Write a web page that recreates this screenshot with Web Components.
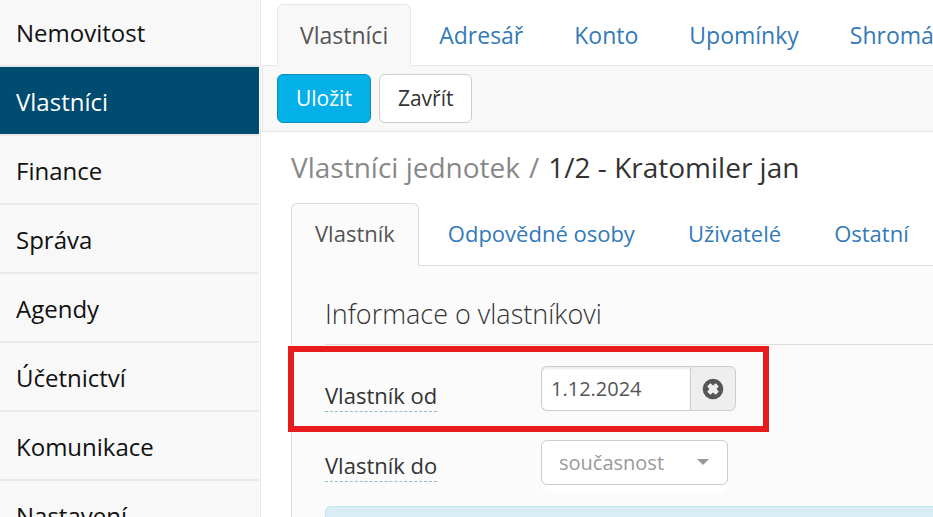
<!DOCTYPE html>
<html lang="cs">
<head>
<meta charset="utf-8">
<meta name="viewport" content="width=device-width, initial-scale=1">
<title>Vlastníci jednotek</title>
<style>
  html, body {
    height: 100%;
    margin: 0;
    overflow: hidden;
  }
  body {
    background: #fff;
    color: #333;
    font-family: "Open Sans", "Noto Sans", sans-serif;
  }
</style>
</head>
<body>

<app-shell>
  <side-nav slot="nav">
    <nav-item href="#nemovitost">Nemovitost</nav-item>
    <nav-item href="#vlastnici" active>Vlastníci</nav-item>
    <nav-item href="#finance">Finance</nav-item>
    <nav-item href="#sprava">Správa</nav-item>
    <nav-item href="#agendy">Agendy</nav-item>
    <nav-item href="#ucetnictvi">Účetnictví</nav-item>
    <nav-item href="#komunikace">Komunikace</nav-item>
    <nav-item href="#nastaveni">Nastavení</nav-item>
  </side-nav>

  <tab-bar class="main">
    <tab-item href="#vlastnici" active>Vlastníci</tab-item>
    <tab-item href="#adresar">Adresář</tab-item>
    <tab-item href="#konto">Konto</tab-item>
    <tab-item href="#upominky">Upomínky</tab-item>
    <tab-item href="#shromazdeni">Shromáždění</tab-item>
  </tab-bar>

  <tool-bar>
    <action-button primary>Uložit</action-button>
    <action-button>Zavřít</action-button>
  </tool-bar>

  <page-content>
    <page-title section="Vlastníci jednotek">1/2 - Kratomiler jan</page-title>

    <tab-bar class="sub">
      <tab-item href="#vlastnik" active>Vlastník</tab-item>
      <tab-item href="#osoby">Odpovědné osoby</tab-item>
      <tab-item href="#uzivatele">Uživatelé</tab-item>
      <tab-item href="#ostatni">Ostatní</tab-item>
    </tab-bar>

    <form-panel heading="Informace o vlastníkovi">
      <date-field label="Vlastník od" value="1.12.2024" highlight></date-field>
      <select-field label="Vlastník do" value="současnost"></select-field>
      <info-alert></info-alert>
    </form-panel>
  </page-content>
</app-shell>

<script>
// Attach an open shadow root filled with the given markup
function render(el, html) {
  const template = document.createElement('template');
  template.innerHTML = html;
  el.attachShadow({mode: 'open'});
  el.shadowRoot.appendChild(template.content.cloneNode(true));
}

class AppShell extends HTMLElement {
  constructor() {
    super();
    render(this, `
      <style>
        :host {
          display: grid;
          grid-template-columns: 259px minmax(0, 1fr);
          column-gap: 1px;
          height: 100vh;
          overflow: hidden;
        }
        main {
          min-width: 0;
          padding-left: 1px;
          border-left: 1px solid #e7e7e7;
        }
      </style>
      <slot name="nav"></slot>
      <main><slot></slot></main>
    `);
  }
}

class SideNav extends HTMLElement {
  constructor() {
    super();
    render(this, `
      <style>
        :host { display: block; background: #f8f8f8; overflow: hidden; }
        nav { display: flex; flex-direction: column; margin-top: -2px; }
      </style>
      <nav><slot></slot></nav>
    `);
  }
}

class NavItem extends HTMLElement {
  constructor() {
    super();
    render(this, `
      <style>
        :host { display: block; border-bottom: 2px solid #e9e9e9; }
        a {
          display: block;
          padding: 19px 16px 16px;
          color: #111;
          font-size: 24px;
          line-height: 32px;
          text-decoration: none;
        }
        :host([active]) a { background: #004b70; color: #fff; }
      </style>
      <a><slot></slot></a>
    `);
  }

  connectedCallback() {
    this.shadowRoot.querySelector('a').href = this.getAttribute('href');
  }
}

class TabBar extends HTMLElement {
  constructor() {
    super();
    render(this, `
      <style>
        :host {
          display: block;
          border-bottom: 1px solid var(--tab-line);
        }
        :host(.main) {
          --tab-line: #e7e7e7;
          --tab-fill: #f8f8f8;
          --tab-size: 23px;
          --tab-padding: 14px 22px 15px;
          padding: 4px 0 0 15px;
        }
        :host(.sub) {
          --tab-line: #ddd;
          --tab-fill: #fbfbfb;
          --tab-size: 22px;
          --tab-padding: 13px 23px 17px;
        }
        nav { display: flex; gap: 5px; margin-bottom: -1px; }
      </style>
      <nav><slot></slot></nav>
    `);
  }
}

class TabItem extends HTMLElement {
  constructor() {
    super();
    render(this, `
      <style>
        :host { display: block; flex: none; }
        a {
          display: block;
          padding: var(--tab-padding);
          border: 1px solid transparent;
          border-bottom: 0;
          border-radius: 6px 6px 0 0;
          color: #337ab7;
          font-size: var(--tab-size);
          line-height: 32px;
          text-decoration: none;
        }
        :host([active]) a {
          border-color: var(--tab-line);
          background: var(--tab-fill);
          color: #555;
        }
      </style>
      <a><slot></slot></a>
    `);
  }

  connectedCallback() {
    this.shadowRoot.querySelector('a').href = this.getAttribute('href');
  }
}

class ToolBar extends HTMLElement {
  constructor() {
    super();
    render(this, `
      <style>
        :host {
          display: flex;
          gap: 8px;
          padding: 8px 14px;
          border: 1px solid #e7e7e7;
          border-width: 0 0 1px 1px;
          background: #f8f8f8;
        }
      </style>
      <slot></slot>
    `);
  }
}

class ActionButton extends HTMLElement {
  constructor() {
    super();
    render(this, `
      <style>
        :host { display: block; }
        button {
          display: block;
          padding: 8px 18px;
          border: 1px solid #ccc;
          border-radius: 6px;
          background: #fff;
          color: #333;
          font: inherit;
          font-size: 21px;
          line-height: 31px;
        }
        :host([primary]) button {
          border-color: #0a8fbd;
          background: #03b0e8;
          color: #fff;
        }
      </style>
      <button type="button"><slot></slot></button>
    `);
  }
}

class PageContent extends HTMLElement {
  constructor() {
    super();
    render(this, `
      <style>
        :host { display: block; padding: 15px 0 0 29px; }
      </style>
      <slot></slot>
    `);
  }
}

class PageTitle extends HTMLElement {
  constructor() {
    super();
    render(this, `
      <style>
        :host { display: block; }
        h1 {
          display: flex;
          gap: 9px;
          margin: 0 0 16px;
          font-size: 28px;
          font-weight: 400;
          line-height: 40px;
          white-space: nowrap;
        }
        span { color: #888; }
      </style>
      <h1><span class="section"></span><span>/</span><slot></slot></h1>
    `);
  }

  connectedCallback() {
    this.shadowRoot.querySelector('.section').textContent = this.getAttribute('section');
  }
}

class FormPanel extends HTMLElement {
  constructor() {
    super();
    render(this, `
      <style>
        :host {
          display: block;
          min-height: 100vh;
          padding: 28px 0 0 33px;
          border-left: 1px solid #ddd;
          background: #fbfbfb;
        }
        h2 {
          margin: 0 0 21px;
          padding-bottom: 10px;
          border-bottom: 1px solid #ddd;
          font-size: 27px;
          font-weight: 300;
          line-height: 40px;
        }
        .rows { display: grid; row-gap: 29px; }
      </style>
      <h2></h2>
      <div class="rows"><slot></slot></div>
    `);
  }

  connectedCallback() {
    this.shadowRoot.querySelector('h2').textContent = this.getAttribute('heading');
  }
}

// Row styles shared by the date and select fields
const fieldStyle = `
  :host {
    display: grid;
    position: relative;
    grid-template-columns: 216px minmax(0, 1fr);
    align-items: start;
    height: 45px;
  }
  label {
    justify-self: start;
    margin-top: var(--label-top);
    border-bottom: 1px dashed #8fbfca;
    font-size: 22px;
    line-height: 32px;
  }
`;

class DateField extends HTMLElement {
  constructor() {
    super();
    render(this, `
      <style>
        ${fieldStyle}
        :host { --label-top: 13px; }
        /* Frame drawn over the row */
        :host([highlight])::after {
          content: "";
          position: absolute;
          top: -20px;
          bottom: -21px;
          left: -37px;
          width: 469px;
          border: 6px solid #e81c1c;
          pointer-events: none;
        }
        .group { display: flex; height: 45px; }
        input {
          box-sizing: border-box;
          width: 149px;
          padding: 0 9px;
          border: 1px solid #ccc;
          border-right: 0;
          border-radius: 6px 0 0 6px;
          background: #fff;
          box-shadow: inset 0 2px 2px rgba(0, 0, 0, .07);
          color: #555;
          font: inherit;
          font-size: 20px;
        }
        button {
          display: grid;
          place-items: center;
          width: 46px;
          padding: 0;
          border: 1px solid #ccc;
          border-radius: 0 6px 6px 0;
          background: #eee;
          color: #555;
        }
        svg { display: block; }
      </style>
      <label for="date"></label>
      <div class="group">
        <input id="date" type="text">
        <button type="button" aria-label="Vymazat">
          <svg width="22" height="22" viewBox="0 0 22 22">
            <circle cx="11" cy="11" r="10.3" fill="currentColor"/>
            <path d="M8.3 5.2 11 7.4l2.7-2.2 3.1 3.1-2.2 2.7 2.2 2.7-3.1 3.1-2.7-2.2-2.7 2.2-3.1-3.1L7.4 11 5.2 8.3z" fill="#eee"/>
          </svg>
        </button>
      </div>
    `);
  }

  connectedCallback() {
    const input = this.shadowRoot.querySelector('input');
    this.shadowRoot.querySelector('label').textContent = this.getAttribute('label');
    input.value = this.getAttribute('value');
    this.shadowRoot.querySelector('button').addEventListener('click', () => {
      input.value = '';
      input.focus();
    });
  }
}

class SelectField extends HTMLElement {
  constructor() {
    super();
    render(this, `
      <style>
        ${fieldStyle}
        :host { --label-top: 9px; }
        .box { position: relative; width: 187px; }
        select {
          display: block;
          appearance: none;
          width: 100%;
          height: 45px;
          padding: 0 17px;
          border: 1px solid #ccc;
          border-radius: 6px;
          background: #fff;
          box-shadow: 0 8px 0 -1px #fff;
          color: #999;
          font: inherit;
          font-size: 20px;
        }
        svg {
          position: absolute;
          top: 19px;
          right: 19px;
          pointer-events: none;
        }
      </style>
      <label for="until"></label>
      <div class="box">
        <select id="until"><option></option></select>
        <svg width="12" height="6" viewBox="0 0 12 6"><path d="M0 0h12L6 6z" fill="#999"/></svg>
      </div>
    `);
  }

  connectedCallback() {
    this.shadowRoot.querySelector('label').textContent = this.getAttribute('label');
    this.shadowRoot.querySelector('option').textContent = this.getAttribute('value');
  }
}

class InfoAlert extends HTMLElement {
  constructor() {
    super();
    render(this, `
      <style>
        :host {
          display: block;
          min-height: 60px;
          margin-top: -8px;
          border: 1px solid #bce8f1;
          border-right: 0;
          border-radius: 6px 0 0 6px;
          background: #d9edf7;
        }
      </style>
      <slot></slot>
    `);
  }
}

window.customElements.define('app-shell', AppShell);
window.customElements.define('side-nav', SideNav);
window.customElements.define('nav-item', NavItem);
window.customElements.define('tab-bar', TabBar);
window.customElements.define('tab-item', TabItem);
window.customElements.define('tool-bar', ToolBar);
window.customElements.define('action-button', ActionButton);
window.customElements.define('page-content', PageContent);
window.customElements.define('page-title', PageTitle);
window.customElements.define('form-panel', FormPanel);
window.customElements.define('date-field', DateField);
window.customElements.define('select-field', SelectField);
window.customElements.define('info-alert', InfoAlert);
</script>
</body>
</html>
